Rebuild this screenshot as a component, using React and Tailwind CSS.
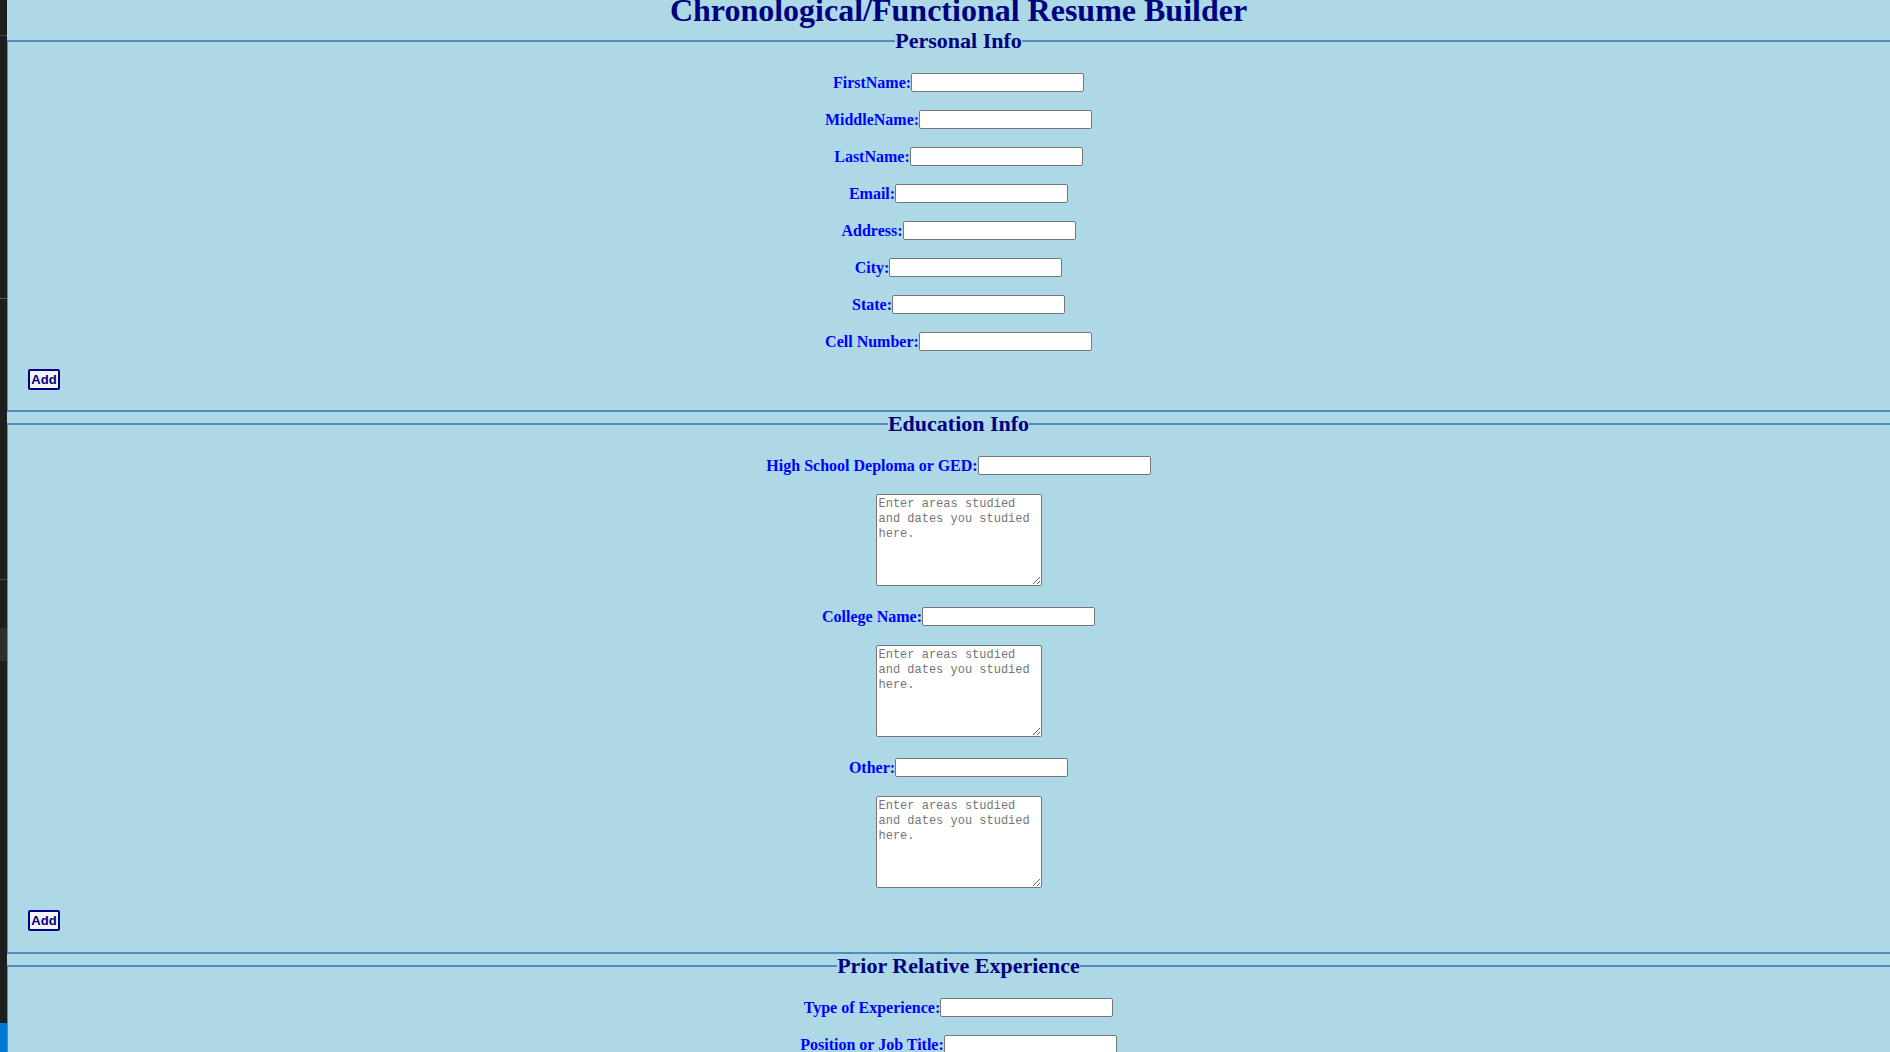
import React from 'react';

const serif = "font-['Liberation_Serif','Times_New_Roman',serif]";

function Field({ label }) {
  return (
    <div className="flex h-[19px] items-center justify-center self-center">
      <label className="whitespace-nowrap text-[16px] font-bold leading-[19px] text-[#0000ff]">{label}</label>
      <input
        type="text"
        className="h-[19px] w-[173px] rounded-[2px] border border-[#767676] bg-white px-[2px] font-['Liberation_Sans',Arial,sans-serif] text-[13px] outline-none"
      />
    </div>
  );
}

function Notes({ className = '' }) {
  return (
    <textarea
      placeholder="Enter areas studied and dates you studied here."
      className={`h-[92px] w-[166px] resize self-center rounded-[2px] border border-[#767676] bg-white p-[2px] font-['Liberation_Mono','DejaVu_Sans_Mono',monospace] text-[12px] leading-[15px] outline-none placeholder:text-[#757575] ${className}`}
    />
  );
}

function AddButton({ className = '' }) {
  return (
    <button
      className={`h-[21px] w-[32px] self-start rounded-[2px] border-2 border-[#00008b] bg-[#f4f4f4] px-[1px] font-['Liberation_Sans',Arial,sans-serif] text-[13px] font-bold leading-[15px] text-[#000080] ${className}`}
    >
      Add
    </button>
  );
}

function Section({ title, children, className = '' }) {
  return (
    <fieldset className={`border-x border-y-2 border-[#508cbe] px-[20px] ${className}`}>
      <legend className="mx-auto px-0 text-[22px] font-bold leading-[24px] text-[#000080]">{title}</legend>
      <div className="flex flex-col pt-[20px]">{children}</div>
    </fieldset>
  );
}

export default function App() {
  const personal = ['FirstName:', 'MiddleName:', 'LastName:', 'Email:', 'Address:', 'City:', 'State:', 'Cell Number:'];

  return (
    <div className={`flex h-screen w-full overflow-hidden bg-[#add8e6] ${serif}`}>
      {/* editor sidebar strip at the left edge */}
      <div className="flex w-[7px] shrink-0 flex-col bg-[#1e1e1e]">
        <div className="h-[35px]" />
        <div className="h-px bg-[#454545]" />
        <div className="h-[262px]" />
        <div className="h-px bg-[#5a5a5a]" />
        <div className="h-[280px]" />
        <div className="h-px bg-[#454545]" />
        <div className="h-[48px]" />
        <div className="h-[33px] bg-[#2f2f2f]" />
        <div className="flex-1" />
        <div className="h-[29px] bg-[#0078d4]" />
      </div>

      <div className="w-[1903px] shrink-0">
        <h1 className="-mt-[8px] text-center text-[32px] font-bold leading-[37px] text-[#000080]">
          Chronological/Functional Resume Builder
        </h1>

        <Section title="Personal Info" className="pb-[20px]">
          <div className="flex flex-col gap-[18px]">
            {personal.map(l => (
              <Field key={l} label={l} />
            ))}
          </div>
          <AddButton className="mt-[18px]" />
        </Section>

        <Section title="Education Info" className="pb-[21px]">
          <Field label="High School Deploma or GED:" />
          <Notes className="mt-[19px]" />
          <div className="mt-[21px] flex flex-col">
            <Field label="College Name:" />
          </div>
          <Notes className="mt-[19px]" />
          <div className="mt-[21px] flex flex-col">
            <Field label="Other:" />
          </div>
          <Notes className="mt-[19px]" />
          <AddButton className="mt-[22px]" />
        </Section>

        <Section title="Prior Relative Experience" className="pb-[20px]">
          <div className="flex flex-col gap-[18px]">
            <Field label="Type of Experience:" />
            <Field label="Position or Job Title:" />
            <Field label="Company Name:" />
          </div>
          <Notes className="mt-[19px]" />
          <AddButton className="mt-[22px]" />
        </Section>
      </div>
    </div>
  );
}
